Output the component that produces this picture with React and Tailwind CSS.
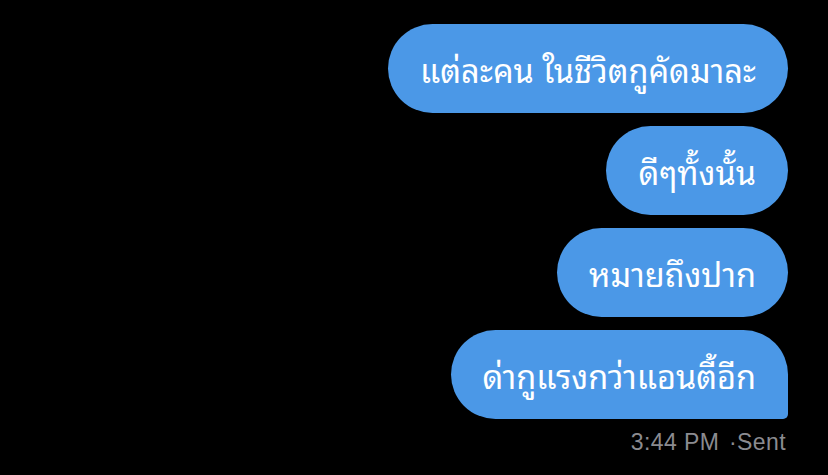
export default function App() {
  const msgs = ["แต่ละคน ในชีวิตกูคัดมาละ", "ดีๆทั้งนั้น", "หมายถึงปาก", "ด่ากูแรงกว่าแอนตี้อีก"];
  return (
    <div className="w-[828px] h-[475px] bg-black overflow-hidden flex flex-col items-end pt-[24px] pr-[40px]" style={{ fontFamily: '"Noto Sans Thai Looped", "Noto Sans Thai", "Noto Sans", "DejaVu Sans", sans-serif' }}>
      <div className="flex flex-col items-end gap-[13px]">
        {msgs.map((m, i) => (
          <div
            key={i}
            className={`h-[89px] flex items-center px-[32px] bg-[#4b98e7] text-white text-[32.5px] leading-none ${i === 3 ? "rounded-l-[45px] rounded-tr-[45px] rounded-br-[5px]" : "rounded-[45px]"}`}
          >
            {m}
          </div>
        ))}
      </div>
      <div className="mt-[12px] text-[23px] tracking-[0.4px] text-[#8b8b90] leading-none pr-[2px]" style={{ fontFamily: '"Liberation Sans", Arial, sans-serif' }}>
        3:44 PM <span className="ml-[3px]">·</span>Sent
      </div>
    </div>
  );
}
